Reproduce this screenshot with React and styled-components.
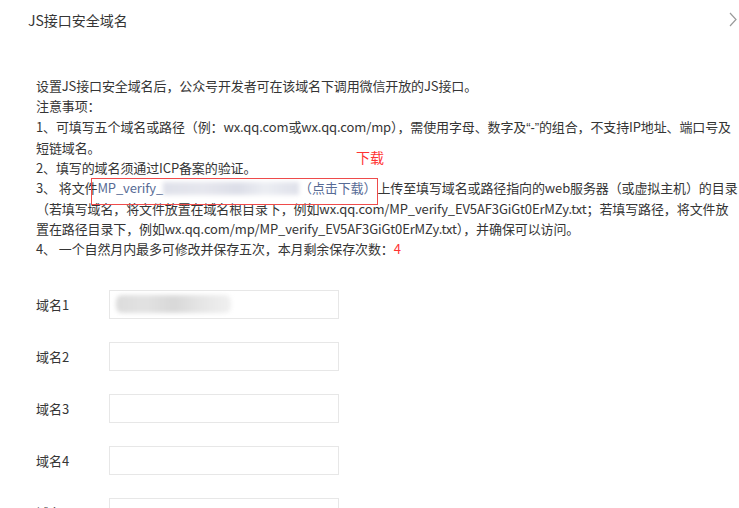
import styled, { createGlobalStyle } from "styled-components";

const GlobalStyle = createGlobalStyle`
  html, body {
    margin: 0;
    padding: 0;
    background: #fff;
    overflow: hidden;
  }
  body {
    font-family: "Noto Sans CJK SC", "Noto Sans", sans-serif;
    color: #353535;
  }
`;

const Page = styled.div`
  width: 739px;
  height: 508px;
  overflow: hidden;
  background: #fff;
`;

const Header = styled.div`
  display: flex;
  align-items: center;
  justify-content: space-between;
  height: 40px;
  padding: 0 2px 0 28px;
`;

const Title = styled.h2`
  margin: 0;
  font-size: 14px;
  font-weight: normal;
  color: #353535;
`;

const Chevron = styled.svg`
  width: 8px;
  height: 15px;
  margin-top: -1px;
`;

const Body = styled.div`
  padding: 36px 0 0 36px;
`;

const Notes = styled.div`
  position: relative;
  font-size: 13px;
  line-height: 20.3px;
  letter-spacing: -0.12px;
`;

const Line = styled.div`
  white-space: nowrap;
`;

const Quote = styled.span`
  font-family: "Liberation Sans", sans-serif;
`;

const Link = styled.span`
  color: #576b95;
  margin-right: ${(p) => p.gap || 0}px;
`;

const Blur = styled.span`
  display: inline-block;
  width: 136px;
  height: 13px;
  vertical-align: -2px;
  background: linear-gradient(
    90deg,
    #dfe1ea 0%,
    #e6e7ee 30%,
    #dcdee8 55%,
    #eceef3 75%,
    #dfe1ea 100%
  );
  filter: blur(2px);
`;

const Red = styled.span`
  color: #f33;
`;

const Callout = styled.div`
  position: absolute;
  left: 55px;
  top: 102px;
  width: 285px;
  height: 25px;
  border: 1px solid #ee4b4b;
  pointer-events: none;
`;

const CalloutLabel = styled.div`
  position: absolute;
  left: 320px;
  top: 71px;
  font-size: 14px;
  line-height: 20px;
  color: #f33;
`;

const Form = styled.div`
  display: flex;
  flex-direction: column;
  gap: 23px;
  margin-top: 30px;
`;

const Row = styled.div`
  display: flex;
  align-items: center;
`;

const Label = styled.label`
  width: 73px;
  font-size: 13px;
  color: #353535;
`;

const Field = styled.div`
  position: relative;
  width: 228px;
  height: 27px;
  border: 1px solid #e7e7e7;
  background: #fff;
`;

const FieldBlur = styled.div`
  position: absolute;
  left: 6px;
  top: 4px;
  width: 115px;
  height: 18px;
  background: linear-gradient(
    90deg,
    #dcdcdc 0%,
    #e2e2e2 25%,
    #d8d8d8 50%,
    #e6e6e6 75%,
    #f0f0f0 100%
  );
  filter: blur(2px);
  border-radius: 6px;
`;

const domains = [1, 2, 3, 4, 5];

export default function App() {
  return (
    <Page>
      <GlobalStyle />
      <Header>
        <Title>JS接口安全域名</Title>
        <Chevron viewBox="0 0 8 15">
          <path d="M1 1l6 6.5-6 6.5" fill="none" stroke="#9a9a9a" strokeWidth="1.2" />
        </Chevron>
      </Header>
      <Body>
        <Notes>
          <Line>设置JS接口安全域名后，公众号开发者可在该域名下调用微信开放的JS接口。</Line>
          <Line>注意事项：</Line>
          <Line>
            1、可填写五个域名或路径（例：wx.qq.com或wx.qq.com/mp），需使用字母、数字及<Quote>“-”</Quote>的组合，不支持IP地址、端口号及
          </Line>
          <Line>短链域名。</Line>
          <Line>2、填写的域名须通过ICP备案的验证。</Line>
          <Line>
            3、 将文件<Link>MP_verify_</Link>
            <Blur />
            <Link gap={1}>（点击下载）</Link>上传至填写域名或路径指向的web服务器（或虚拟主机）的目录
          </Line>
          <Line>
            （若填写域名，将文件放置在域名根目录下，例如wx.qq.com/MP_verify_EV5AF3GiGt0ErMZy.txt；若填写路径，将文件放
          </Line>
          <Line>置在路径目录下，例如wx.qq.com/mp/MP_verify_EV5AF3GiGt0ErMZy.txt），并确保可以访问。</Line>
          <Line>
            4、 一个自然月内最多可修改并保存五次，本月剩余保存次数：<Red>4</Red>
          </Line>
          <CalloutLabel>下载</CalloutLabel>
          <Callout />
        </Notes>
        <Form>
          {domains.map((n) => (
            <Row key={n}>
              <Label>域名{n}</Label>
              <Field>{n === 1 && <FieldBlur />}</Field>
            </Row>
          ))}
        </Form>
      </Body>
    </Page>
  );
}
